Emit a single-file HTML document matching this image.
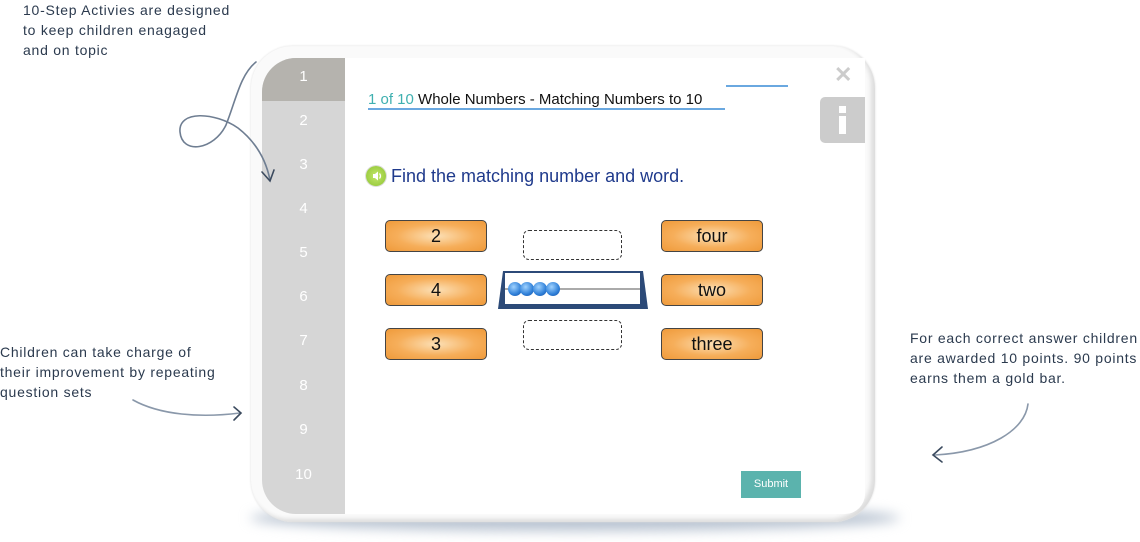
<!DOCTYPE html>
<html><head><meta charset="utf-8"><style>
body{margin:0;width:1140px;height:542px;background:#fff;position:relative;overflow:hidden;font-family:"Liberation Sans",sans-serif}
.note{position:absolute;font-size:14px;line-height:20px;color:#2b3a4e;letter-spacing:.75px;white-space:nowrap}
.shadow{position:absolute;left:250px;top:505px;width:650px;height:26px;border-radius:50%;background:#b8c3d1;filter:blur(6px)}
.frame{position:absolute;left:251px;top:46px;width:624px;height:476px;border-radius:42px;background:#fafafa;box-shadow:inset -4px -3px 4px #ddd, 0 0 2px #ddd}
.inner{position:absolute;left:262px;top:58px;width:603px;height:456px;border-radius:34px 0 20px 34px;background:#fff;overflow:hidden}
.side{position:absolute;left:0;top:0;width:83px;height:456px;background:#d6d6d6}
.side div{position:absolute;left:0;width:83px;text-align:center;color:#fff;font-size:15px}
.btn{position:absolute;width:100px;height:30px;border:1.5px solid #444;border-radius:5px;background:radial-gradient(ellipse at center,#fce0b6 0%,#f6ae5a 55%,#ef9a3a 100%);font-size:18px;text-align:center;line-height:31px;color:#111}
.dash{position:absolute;width:97px;height:28px;border:1.5px dashed #333;border-radius:6px}
.bead{position:absolute;top:282px;width:14px;height:14px;border-radius:50%;background:radial-gradient(circle at 40% 35%,#9fd2ff,#2e7fd8 60%,#1a4fa0)}
</style></head><body>
<div class="note" style="left:23px;top:0">10-Step Activies are designed<br>to keep children enagaged<br>and on topic</div>
<div class="note" style="left:0;top:342px">Children can take charge of<br>their improvement by repeating<br>question sets</div>
<div class="note" style="left:910px;top:328px">For each correct answer children<br>are awarded 10 points. 90 points<br>earns them a gold bar.</div>
<div class="shadow"></div>
<div class="frame"></div>
<div class="inner">
 <div class="side">
  <div style="top:0;height:43px;background:#b5b3ae;line-height:38px">1</div>
  <div style="top:54px">2</div><div style="top:98px">3</div><div style="top:142px">4</div><div style="top:186px">5</div><div style="top:230px">6</div><div style="top:274px">7</div><div style="top:319px">8</div><div style="top:363px">9</div><div style="top:408px">10</div>
 </div>
</div>
<svg style="position:absolute;left:0;top:0;z-index:5" width="1140" height="542" fill="none" stroke="#3b4a5e" stroke-width="1.6" stroke-linecap="round">
<path d="M256 62 C240 75 236 100 226 125 C214 150 182 155 180 132 C178 110 215 112 238 128 C256 142 266 160 270 180" stroke="#6f7e92"/>
<path d="M262 172 L270 181 L274 170"/>
<path d="M133 400 C160 415 200 418 240 413" stroke="#8a98aa"/>
<path d="M234 407 L241 413 L234 420" stroke="#3b4a5e"/>
<path d="M1028 404 C1025 430 990 452 935 455" stroke="#8a98aa"/>
<path d="M942 447 L933 455 L942 462" stroke="#3b4a5e"/>
</svg>
<div style="position:absolute;left:368px;top:91px;font-size:15px;color:#111;white-space:nowrap"><span style="color:#3fb0b0">1 of 10</span> Whole Numbers - Matching Numbers to 10</div>
<div style="position:absolute;left:368px;top:108px;width:357px;height:1.5px;background:#6aa8e0"></div>
<div style="position:absolute;left:726px;top:85px;width:62px;height:1.5px;background:#6aa8e0"></div>
<div style="position:absolute;left:834px;top:62px;font-size:22px;font-weight:bold;color:#ccc">✕</div>
<div style="position:absolute;left:820px;top:97px;width:45px;height:46px;background:#ccc;border-radius:5px 0 0 5px"><div style="position:absolute;left:19px;top:9px;width:7px;height:7px;background:#fff"></div><div style="position:absolute;left:19px;top:19px;width:7px;height:18px;background:#fff"></div></div>
<div style="position:absolute;left:366px;top:166px;width:20px;height:20px;border-radius:50%;background:radial-gradient(circle,#c4e86a,#8cc232);box-shadow:0 0 0 1px #ddd"></div>
<svg style="position:absolute;left:366px;top:166px" width="20" height="20"><path d="M7 8 H9 L12 5.5 V14.5 L9 12 H7 Z" fill="#fff"/><path d="M13.5 7.5 Q15.5 10 13.5 12.5" stroke="#fff" stroke-width="1.3" fill="none"/></svg>
<div style="position:absolute;left:391px;top:166px;font-size:18px;color:#1f3a8c;white-space:nowrap">Find the matching number and word.</div>
<div class="btn" style="left:385px;top:220px">2</div>
<div class="btn" style="left:385px;top:274px">4</div>
<div class="btn" style="left:385px;top:328px">3</div>
<div class="btn" style="left:661px;top:220px">four</div>
<div class="btn" style="left:661px;top:274px">two</div>
<div class="btn" style="left:661px;top:328px">three</div>
<div class="dash" style="left:523px;top:230px"></div>
<div class="dash" style="left:523px;top:320px"></div>
<svg style="position:absolute;left:497px;top:269px" width="152" height="42"><path d="M6 2 H146 L151 40 H1 Z" fill="#2c4a78"/><rect x="8" y="4" width="135" height="31" fill="#fff"/><line x1="8" y1="20" x2="143" y2="20" stroke="#aaa" stroke-width="2"/></svg>
<div class="bead" style="left:508px"></div><div class="bead" style="left:520px"></div><div class="bead" style="left:533px"></div><div class="bead" style="left:546px"></div>
<div style="position:absolute;left:741px;top:471px;width:60px;height:27px;background:#5bb3ad;color:#fff;font-size:11px;text-align:center;line-height:27px">Submit</div>
</body></html>
